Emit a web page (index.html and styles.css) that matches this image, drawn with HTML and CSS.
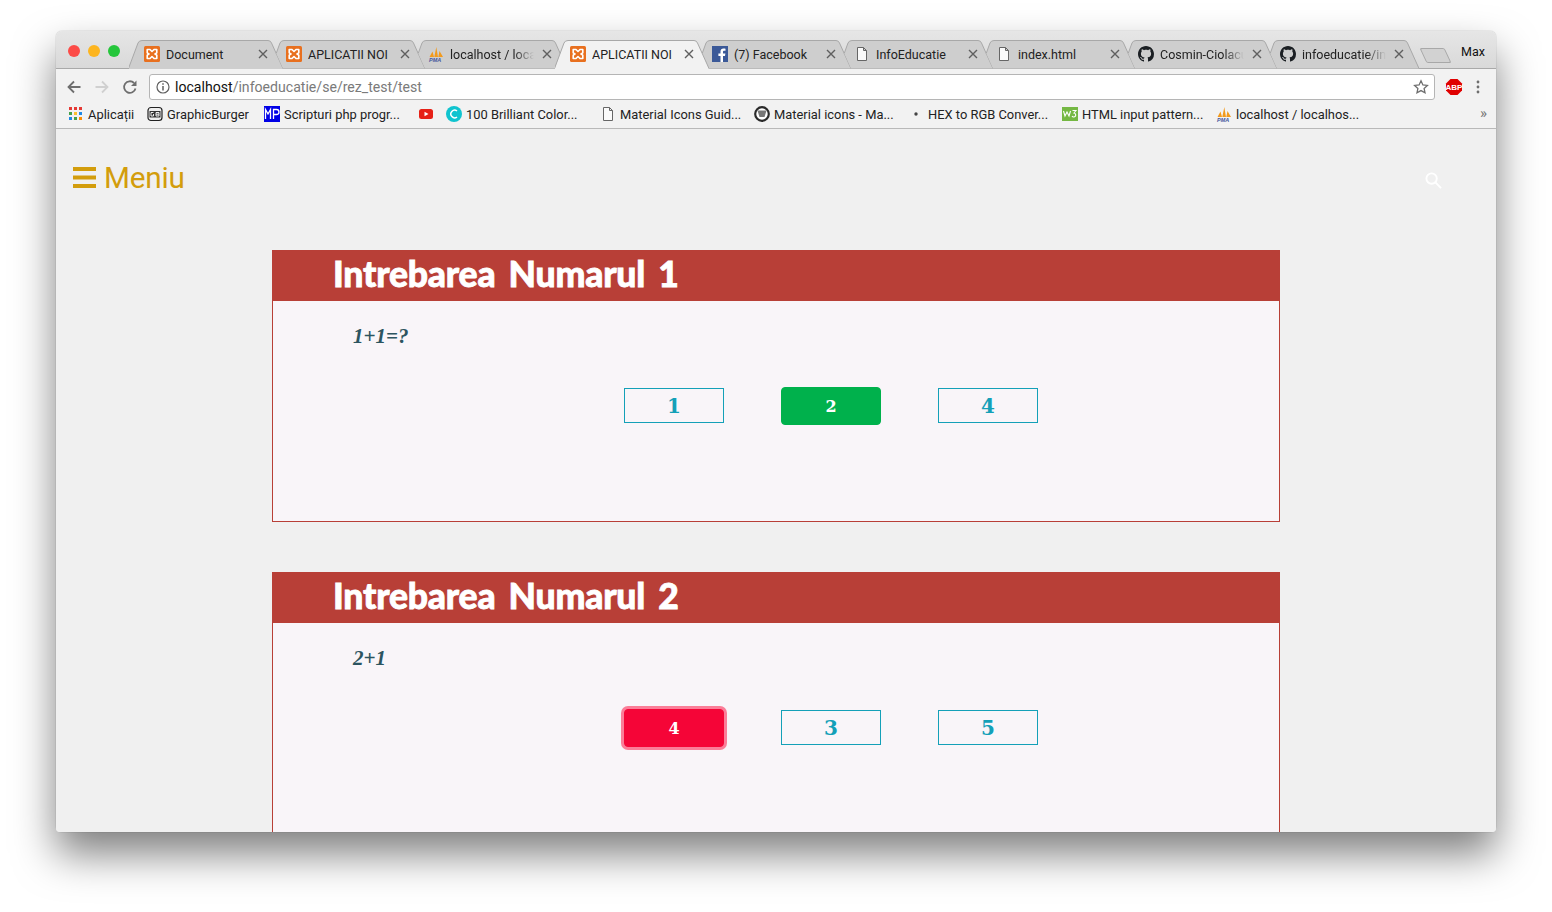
FILE: index.html
```html
<!DOCTYPE html>
<html lang="ro">
<head>
<meta charset="utf-8">
<title>APLICATII NOI</title>
<link rel="stylesheet" href="styles.css">
</head>
<body>
<svg class="defs" width="0" height="0" aria-hidden="true">
  <symbol id="tab-shape" viewBox="0 0 154 29"><path d="M5.250 13.300 9 3Q10 .5 13 .5H139Q141.500 .5 142.500 3L154 28.500H12z" class="tab-fill"/><path d="M5.250 13.300 9 3Q10 .5 13 .5H139Q141.500 .5 142.500 3L154 28.500" class="tab-line"/></symbol>
  <symbol id="tab-full" viewBox="0 0 154 29"><path d="M-.5 29 9 3Q10 .5 13 .5H139Q141.500 .5 142.500 3L154 29z" class="tab-fill"/><path d="M-.5 28.500 9 3Q10 .5 13 .5H139Q141.500 .5 142.500 3L154 28.500" class="tab-line"/></symbol>
  <symbol id="xampp" viewBox="0 0 16 16"><rect width="16" height="16" rx="1.500" fill="#e8701f"/><path d="M3.200 3.500h2.800l2 2 2-2h2.800v3.300L11 8l1.800 1.200v3.300H10l-2-2-2 2H3.200V9.200L5 8 3.200 6.800z" fill="none" stroke="#fff" stroke-width="1.600" stroke-linejoin="round"/></symbol>
  <symbol id="pma" viewBox="0 0 16 16"><path d="M1.500 11 4.500 5.500 6 11zM6.300 11 8.300 1 10 11zM10.300 11 11.500 5 15 11z" fill="#f29a1d"/><text x="1" y="15.500" font-family="Liberation Sans" font-size="5.500" font-weight="700" font-style="italic" fill="#44569c">PMA</text></symbol>
  <symbol id="doc" viewBox="0 0 16 16"><path d="M3.500 1.500h6l3 3v10h-9zM9.500 1.500v3h3" fill="#fafafa" stroke="#666" stroke-width="1"/></symbol>
  <symbol id="gh" viewBox="0 0 16 16"><path fill="#1b1f23" d="M8 0C3.580 0 0 3.580 0 8c0 3.540 2.290 6.530 5.470 7.590.4.070.55-.17.55-.38 0-.19-.01-.82-.01-1.490-2.010.37-2.530-.49-2.690-.94-.09-.23-.48-.94-.82-1.130-.28-.15-.68-.52-.01-.53.63-.01 1.080.58 1.230.82.720 1.210 1.870.870 2.330.660.070-.520.280-.870.510-1.070-1.780-.2-3.640-.890-3.640-3.950 0-.870.310-1.590.820-2.150-.080-.2-.360-1.020.080-2.120 0 0 .670-.210 2.200.820.640-.180 1.320-.270 2-.270s1.360.090 2 .270c1.530-1.040 2.200-.820 2.200-.820.440 1.100.160 1.920.080 2.120.510.560.820 1.270.820 2.150 0 3.070-1.870 3.750-3.650 3.950.290.250.540.730.540 1.480 0 1.070-.010 1.930-.010 2.200 0 .210.150.460.550.380A8.010 8.010 0 0 0 16 8c0-4.420-3.580-8-8-8z"/></symbol>
  <symbol id="x" viewBox="0 0 10 10"><path d="M1 1l8 8M9 1l-8 8" stroke="#5f5f5f" stroke-width="1.400" fill="none"/></symbol>
</svg>

<main class="window">
  <header class="titlebar">
    <div class="lights"><i class="light red"></i><i class="light yellow"></i><i class="light green"></i></div>
    <div class="tabs">
      <div class="tab"><svg class="tab-bg"><use href="#tab-full"/></svg><svg class="fav"><use href="#xampp"/></svg><span class="tab-title">Document</span><svg class="close"><use href="#x"/></svg></div>
      <div class="tab"><svg class="tab-bg"><use href="#tab-shape"/></svg><svg class="fav"><use href="#xampp"/></svg><span class="tab-title">APLICATII NOI</span><svg class="close"><use href="#x"/></svg></div>
      <div class="tab"><svg class="tab-bg"><use href="#tab-shape"/></svg><svg class="fav"><use href="#pma"/></svg><span class="tab-title fade">localhost / localhost</span><svg class="close"><use href="#x"/></svg></div>
      <div class="tab active"><svg class="tab-bg"><use href="#tab-full"/></svg><svg class="fav"><use href="#xampp"/></svg><span class="tab-title">APLICATII NOI</span><svg class="close"><use href="#x"/></svg></div>
      <div class="tab"><svg class="tab-bg"><use href="#tab-shape"/></svg><svg class="fav" viewBox="0 0 16 16"><rect width="16" height="16" fill="#3b5998"/><path d="M11 16v-6h2l.4-2.400H11V6c0-.8.300-1.200 1.200-1.200h1.300V2.700C13 2.600 12.300 2.500 11.500 2.500 9.600 2.500 8.500 3.700 8.500 5.600v2H6.400V10h2.100v6z" fill="#fff"/></svg><span class="tab-title">(7) Facebook</span><svg class="close"><use href="#x"/></svg></div>
      <div class="tab"><svg class="tab-bg"><use href="#tab-shape"/></svg><svg class="fav"><use href="#doc"/></svg><span class="tab-title">InfoEducatie</span><svg class="close"><use href="#x"/></svg></div>
      <div class="tab"><svg class="tab-bg"><use href="#tab-shape"/></svg><svg class="fav"><use href="#doc"/></svg><span class="tab-title">index.html</span><svg class="close"><use href="#x"/></svg></div>
      <div class="tab"><svg class="tab-bg"><use href="#tab-shape"/></svg><svg class="fav"><use href="#gh"/></svg><span class="tab-title fade">Cosmin-Ciolacu</span><svg class="close"><use href="#x"/></svg></div>
      <div class="tab"><svg class="tab-bg"><use href="#tab-shape"/></svg><svg class="fav"><use href="#gh"/></svg><span class="tab-title fade">infoeducatie/infoedu</span><svg class="close"><use href="#x"/></svg></div>
      <div class="new-tab"></div>
    </div>
    <span class="profile">Max</span>
  </header>

  <div class="toolbar">
    <svg class="nav-icon" viewBox="0 0 16 16"><path d="M14.500 8H2.500M8 2.500 2.500 8 8 13.500" fill="none" stroke="#6e6e6e" stroke-width="1.800"/></svg>
    <svg class="nav-icon" viewBox="0 0 16 16"><path d="M1.500 8h12M8 2.500 13.500 8 8 13.500" fill="none" stroke="#d0d0d0" stroke-width="1.800"/></svg>
    <svg class="nav-icon" viewBox="0 0 16 16"><path d="M13.500 9.500A5.800 5.800 0 1 1 12 4" fill="none" stroke="#6e6e6e" stroke-width="1.800"/><path d="M14.500 1.500v5.500H9z" fill="#6e6e6e"/></svg>
    <div class="omnibox">
      <svg class="info" viewBox="0 0 14 14"><circle cx="7" cy="7" r="6" fill="none" stroke="#5f5f5f" stroke-width="1.200"/><path d="M7 6v4.500M7 3.300v1.500" stroke="#5f5f5f" stroke-width="1.500"/></svg>
      <span class="url"><b>localhost</b>/infoeducatie/se/rez_test/test</span>
      <svg class="star" viewBox="0 0 16 16"><path d="M8 1.800l1.900 4.100 4.500.5-3.300 3 .9 4.400L8 11.600l-4 2.200.9-4.400-3.300-3 4.500-.5z" fill="none" stroke="#6e6e6e" stroke-width="1.300"/></svg>
    </div>
    <svg class="abp" viewBox="0 0 18 18"><path d="M5.500 1h7L17 5.500v7L12.500 17h-7L1 12.500v-7z" fill="#e00000"/><text x="9" y="12" text-anchor="middle" font-family="Liberation Sans" font-size="8" font-weight="700" fill="#fff">ABP</text></svg>
    <svg class="kebab" viewBox="0 0 4 16"><circle cx="2" cy="3" r="1.400" fill="#6e6e6e"/><circle cx="2" cy="8" r="1.400" fill="#6e6e6e"/><circle cx="2" cy="13" r="1.400" fill="#6e6e6e"/></svg>
  </div>

  <nav class="bookmarks">
    <a class="bm w-apps"><svg class="bm-ico" viewBox="0 0 16 16"><g><rect x="1" y="1" width="3" height="3" fill="#e53935"/><rect x="6" y="1" width="3" height="3" fill="#e53935"/><rect x="11" y="1" width="3" height="3" fill="#e53935"/><rect x="1" y="6" width="3" height="3" fill="#43a047"/><rect x="6" y="6" width="3" height="3" fill="#fbc02d"/><rect x="11" y="6" width="3" height="3" fill="#1e88e5"/><rect x="1" y="11" width="3" height="3" fill="#1e88e5"/><rect x="6" y="11" width="3" height="3" fill="#43a047"/><rect x="11" y="11" width="3" height="3" fill="#fb8c00"/></g></svg>Aplicații</a>
    <a class="bm w-gb"><svg class="bm-ico" viewBox="0 0 16 16"><rect x="1" y="1.500" width="14" height="13" rx="3" fill="#eee" stroke="#222" stroke-width="1.200"/><rect x="2.500" y="5" width="11" height="6.500" fill="#333"/><path d="M6.500 6.500H4v3.500h2.500V8M9 6.500v3.500h3V8.200H9M9 6.500h3v1.700" fill="none" stroke="#fff" stroke-width=".9"/></svg>GraphicBurger</a>
    <a class="bm w-php"><svg class="bm-ico" viewBox="0 0 16 16"><rect width="16" height="16" fill="#0000e6"/><path d="M1.500 13V3.500L4 8l2.500-4.500V13M9.500 13V3.500h3a2.500 2.500 0 0 1 0 5h-3" fill="none" stroke="#fff" stroke-width="1.300"/></svg>Scripturi php progr...</a>
    <a class="bm w-yt"><svg class="bm-ico" viewBox="0 0 16 16"><rect x="1" y="3" width="14" height="10" rx="2.500" fill="#e62117"/><path d="M6.500 5.700v4.600L10.500 8z" fill="#fff"/></svg></a>
    <a class="bm w-col"><svg class="bm-ico" viewBox="0 0 16 16"><circle cx="8" cy="8" r="8" fill="#10c4cf"/><path d="M11 5a3.800 3.800 0 1 0 0 6" fill="none" stroke="#fff" stroke-width="1.500"/></svg>100 Brilliant Color...</a>
    <a class="bm w-guid"><svg class="bm-ico" viewBox="0 0 16 16"><use href="#doc"/></svg>Material Icons Guid...</a>
    <a class="bm w-mat"><svg class="bm-ico" viewBox="0 0 16 16"><circle cx="8" cy="8" r="6.800" fill="#fff" stroke="#2a2a2a" stroke-width="2.200"/><path d="M3.500 4.500h9L10.500 11h-5z" fill="#777"/></svg>Material icons - Ma...</a>
    <a class="bm w-hex"><svg class="bm-ico" viewBox="0 0 16 16"><circle cx="8" cy="8" r="1.700" fill="#444"/></svg>HEX to RGB Conver...</a>
    <a class="bm w-w3"><svg class="bm-ico" viewBox="0 0 16 16"><rect y="1" width="16" height="14" fill="#75b843"/><path d="M1.500 5l1.500 5 2-4 2 4 1.500-5M10.500 4.500h3.500l-2 2.500a2 2 0 1 1-2 3" fill="none" stroke="#fff" stroke-width="1.100"/></svg>HTML input pattern...</a>
    <a class="bm"><svg class="bm-ico" viewBox="0 0 16 16"><use href="#pma"/></svg>localhost / localhos...</a>
    <span class="more">»</span>
  </nav>

  <div class="page">
    <div class="topbar">
      <div class="menu">
        <svg class="burger" viewBox="0 0 23 21"><path d="M0 0h23v4H0zM0 8.500h23v4H0zM0 17h23v4H0z" fill="#d39d0c"/></svg>
        <span class="menu-label">Meniu</span>
      </div>
      <svg class="search" viewBox="0 0 18 18"><circle cx="7" cy="7" r="5.500" fill="none" stroke="#fff" stroke-width="2"/><path d="M11 11 17 17" stroke="#fff" stroke-width="2"/></svg>
    </div>

    <section class="card card-first">
      <h2 class="card-title">Intrebarea Numarul 1</h2>
      <p class="question">1+1=?</p>
      <div class="answers">
        <span class="answer">1</span>
        <span class="answer correct">2</span>
        <span class="answer">4</span>
      </div>
    </section>

    <section class="card">
      <h2 class="card-title">Intrebarea Numarul 2</h2>
      <p class="question">2+1</p>
      <div class="answers">
        <span class="answer wrong">4</span>
        <span class="answer">3</span>
        <span class="answer">5</span>
      </div>
    </section>
  </div>
</main>
</body>
</html>
```

FILE: styles.css
```css
* { box-sizing: border-box; }
html, body { margin: 0; height: 100%; }
body {
  background: #fff;
  padding: 31px 56px 0;
  overflow: hidden;
  font-family: "Roboto", "Liberation Sans", sans-serif;
  color: #222;
}
.defs { position: absolute; }

.window {
  width: 1440px;
  height: 801px;
  border-radius: 6px 6px 4px 4px;
  overflow: hidden;
  background: #f0f0f0;
  display: flex;
  flex-direction: column;
}
body::before {
  content: "";
  position: absolute;
  left: 56px;
  top: 31px;
  width: 1440px;
  height: 801px;
  border-radius: 6px;
  box-shadow: 0 22px 42px rgba(0, 0, 0, .5), 0 0 1px rgba(0, 0, 0, .5);
  z-index: -1;
}

.titlebar {
  height: 38px;
  flex: none;
  display: flex;
  background: linear-gradient(#e6e6e6, #d9d9d9);
  border-bottom: 1px solid #a9a9a9;
  position: relative;
}
.lights { width: 73px; display: flex; gap: 8px; padding: 14px 0 0 12px; flex: none; }
.light { width: 12px; height: 12px; border-radius: 50%; }
.red { background: #fc4b47; }
.yellow { background: #fdb51f; }
.green { background: #25c63b; }

.tabs { display: flex; flex: 1; padding-top: 9px; }
.tab {
  width: 142px;
  height: 28px;
  flex: none;
  position: relative;
  display: flex;
  align-items: center;
  padding: 0 3px 0 15px;
  font-size: 12.500px;
  color: #222;
  z-index: 1;
}
.tab-bg {
  position: absolute;
  left: 0;
  top: 0;
  width: 154px;
  height: 29px;
  z-index: -1;
  overflow: visible;
  fill: #cecece;
}
.tab-fill { stroke: none; }
.tab-line { fill: none; stroke: #a8a8a8; stroke-width: 1; }
.tab.active { z-index: 3; }
.tab.active .tab-bg { fill: #f2f2f2; }
.fav { width: 16px; height: 16px; flex: none; }
.tab-title {
  flex: 1;
  margin-left: 6px;
  white-space: nowrap;
  overflow: hidden;
  min-width: 0;
}
.tab-title.fade {
  -webkit-mask-image: linear-gradient(90deg, #000 76%, transparent 100%);
  mask-image: linear-gradient(90deg, #000 76%, transparent 100%);
}
.close { width: 10px; height: 10px; flex: none; margin-left: 8px; }
.new-tab {
  width: 25px;
  height: 15px;
  margin: 8px 0 0 16px;
  background: #d2d2d2;
  border: 1px solid #a8a8a8;
  border-radius: 2px;
  transform: skewX(25deg);
  flex: none;
}
.profile { position: absolute; right: 11px; top: 13px; font-size: 12.500px; color: #111; }

.toolbar {
  height: 35px;
  flex: none;
  display: flex;
  align-items: center;
  background: #f2f2f2;
  padding: 0 0 0 10px;
}
.nav-icon { width: 16px; height: 16px; flex: none; margin-right: 12px; }
.omnibox {
  width: 1286px;
  height: 26px;
  margin-left: -1px;
  background: #fff;
  border: 1px solid #b5b5b5;
  border-radius: 3px;
  display: flex;
  align-items: center;
  padding: 0 5px 0 6px;
}
.info { width: 14px; height: 14px; flex: none; }
.url { flex: 1; margin-left: 5px; font-size: 14.100px; color: #7a7a7a; white-space: nowrap; }
.url b { font-weight: 400; color: #111; }
.star { width: 16px; height: 16px; flex: none; }
.abp { width: 18px; height: 18px; flex: none; margin-left: 10px; }
.kebab { width: 4px; height: 16px; flex: none; margin-left: 13px; }

.bookmarks {
  height: 25px;
  flex: none;
  display: flex;
  align-items: center;
  padding: 0 0 4px 12px;
  background: #f2f2f2;
  border-bottom: 1px solid #b9b9b9;
  font-size: 12.900px;
  color: #222;
  position: relative;
}
.bm { display: flex; align-items: center; gap: 4px; white-space: nowrap; flex: none; }
.bm-ico { width: 16px; height: 16px; flex: none; }
.w-apps { width: 79px; }
.w-gb { width: 117px; }
.w-php { width: 154px; }
.w-yt { width: 28px; }
.w-col, .w-guid, .w-mat, .w-hex, .w-w3 { width: 154px; }
.more { position: absolute; right: 9px; top: 0; font-size: 15px; color: #777; }

.page {
  flex: 1;
  min-height: 0;
  overflow: hidden;
  background: #f0f0f0;
}
.topbar {
  height: 121px;
  display: flex;
  justify-content: space-between;
  padding: 30px 54px 0 17px;
}
.menu { display: flex; align-items: flex-start; gap: 8px; color: #d39d0c; }
.burger { width: 23px; height: 21px; margin-top: 8px; }
.menu-label { font-family: "Roboto", sans-serif; font-size: 29.700px; line-height: 38px; letter-spacing: -.2px; }
.search { width: 17px; height: 17px; margin-top: 13px; }

.card {
  width: 1008px;
  height: 272px;
  margin-left: 216px;
  background: #f9f5f9;
  border: 1px solid #b83f37;
}
.card-first { margin-bottom: 50px; }
.card-title {
  margin: -1px -1px 0;
  height: 51px;
  background: #b83f37;
  color: #fff;
  font-family: "Lato", sans-serif;
  font-weight: 900;
  font-size: 35.500px;
  line-height: 48px;
  padding-left: 61px;
  letter-spacing: -.2px;
  word-spacing: 5px;
  -webkit-text-stroke: .8px #fff;
}
.question {
  margin: 23px 0 0 80px;
  height: 24px;
  font-family: "Liberation Serif", serif;
  font-weight: 700;
  font-style: italic;
  font-size: 21px;
  line-height: 24px;
  color: #2c5460;
}
.answers {
  display: flex;
  align-items: flex-start;
  gap: 57px;
  margin: 39px 0 0 351px;
  height: 38px;
}
.answer {
  width: 100px;
  height: 35px;
  margin-top: 1px;
  display: flex;
  align-items: center;
  justify-content: center;
  border: 1px solid #14a0b8;
  color: #14a0b8;
  font-family: "DejaVu Serif", serif;
  font-weight: 700;
  font-size: 20px;
}
.correct, .wrong { margin-top: 0; height: 38px; color: #fff; font-size: 16px; border-radius: 4px; }
.correct { background: #00b14c; border-color: #00b14c; }
.wrong {
  background: #f50537;
  border-color: #f50537;
  box-shadow: 0 0 0 3px #fb7d98;
}
```
